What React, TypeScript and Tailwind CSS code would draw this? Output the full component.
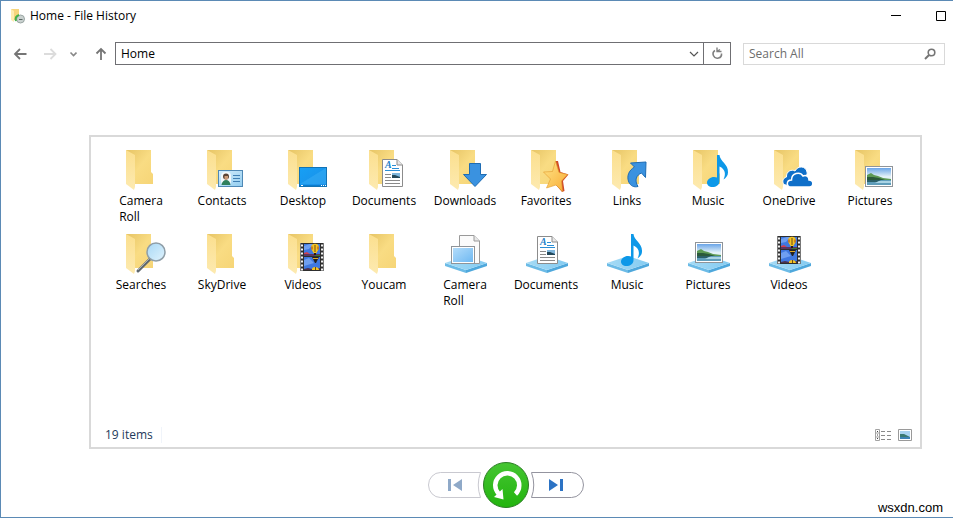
import { ReactNode, useState } from 'react';

type Item = {
  name: string;
  lines?: string[];
  icon: ReactNode;
};

const Folder = ({ children }: { children?: ReactNode }) => (
  <>
    <path d="M10 1H35V23L37 25V35H19Z" fill="url(#folderBack)" />
    <path d="M10 1L19 6V38L18 41L10 35Z" fill="url(#folderFront)" />
    {children}
  </>
);

const Library = ({ children }: { children?: ReactNode }) => (
  <>
    <path d="M5 30L26 37V40L5 33Z" fill="#6cbbe6" />
    <path d="M47 30L26 37V40L47 33Z" fill="#4fa8dc" />
    <path d="M26 23L47 30L26 37L5 30Z" fill="url(#tile)" />
    {children}
  </>
);

const Place = ({ x, y, children }: { x: number; y: number; children: ReactNode }) => (
  <g transform={`translate(${x} ${y})`}>{children}</g>
);

// 21 x 28
const DocumentSheet = () => (
  <>
    <path d="M.5 .5H15L20.500 6V27.500H.5Z" fill="#fff" stroke="#8c8c8c" />
    <path d="M15 .5V6H20.500" fill="#e8e8e8" stroke="#8c8c8c" />
    <text x="3" y="9" fontFamily="Liberation Serif, serif" fontSize="10" fontWeight="700" fontStyle="italic" fill="#1e7fc8">
      A
    </text>
    <path d="M10 6.500H14M10 9.500H17M3 11.500H18" stroke="#2b8fd6" />
    <path d="M3 15.500H9M3 18.500H9M3 21.500H18M3 24.500H18" stroke="#8a8a8a" />
    <rect x="10" y="14" width="8" height="5" fill="#7fb6dc" />
    <path d="M10 16L13 16L18 18V19H10Z" fill="#23485a" />
  </>
);

// 28 x 21
const Photo = () => (
  <>
    <rect x=".5" y=".5" width="27" height="20" fill="#fff" stroke="#8f9499" />
    <rect x="2" y="2" width="24" height="17" fill="url(#sky)" />
    <path d="M2 9L6 7L9 9L13 10L18 12L26 13V14H2Z" fill="#5d9a55" />
    <path d="M2 11L8 11L14 12L20 14H2Z" fill="#2b5a3b" />
    <rect x="2" y="14" width="24" height="5" fill="#5f9dba" />
    <path d="M2 14H16L12 16H2Z" fill="#2c6068" />
    <path d="M14 15H26V17H10Z" fill="#a9d3e4" />
  </>
);

const Balloon = ({ x, y }: { x: number; y: number }) => (
  <Place x={x} y={y}>
    <path d="M0 3.500A4 3.800 0 0 1 8 3.500C8 6 6 7 5.500 9H2.500C2 7 0 6 0 3.500Z" fill="#f4c422" />
    <path d="M1 2.500V5.500M7 2.500V5.500" stroke="#a13a22" fill="none" />
    <path d="M4 1V8" stroke="#6b4a17" />
    <rect x="3" y="9" width="2" height="2" fill="#2a1a10" />
  </Place>
);

// 24 x 28
const Film = () => (
  <>
    <rect width="24" height="28" fill="#2e2e2e" />
    <rect x="4" y="1" width="16" height="12" fill="#3f78e0" />
    <rect x="4" y="14" width="16" height="13" fill="#3f78e0" />
    <path d="M4 3L10 1H13L9 6L4 7ZM4 17L9 15L14 20L4 23Z" fill="#6f9ff0" />
    <path d="M4 10L7 9L10 11H4Z" fill="#cf4052" />
    <path d="M4 11L10 11L20 11V13H4Z" fill="#5e3560" />
    <path d="M15 12H20V13H15Z" fill="#3d7a35" />
    <path d="M4 26L8 25L12 26L20 25V27H4Z" fill="#4c3350" />
    <Balloon x={11} y={1} />
    <path d="M12 14H19L16 20H15Z" fill="#24211f" />
    <path d="M13 15H18V16H13Z" fill="#e0a926" />
    <path d="M12 27C11 23 19 23 19 27Z" fill="#f4c422" />
    <path d="M15.500 24V27" stroke="#6b4a17" />
    <path d="M2 1.500V28M22 1.500V28" stroke="#f2f2f2" strokeWidth="2" strokeDasharray="2 2" />
    <path d="M.5 0V28M23.500 0V28" stroke="#777" />
  </>
);

// 21 x 32
const Note = () => (
  <path
    d="M10 0H12.500C13 6.500 21.500 9 21 17.500C21 20.500 19 23 16.500 24.500C19 19.500 18.500 14 12.500 11.500V26C12.500 30 9 32 5.500 32C2 32 0 30 0 27.500C0 24.500 3.500 22 7 22C8.200 22 9.200 22.200 10 22.600Z"
    fill="#0d98e8"
  />
);

const items: Item[] = [
  { name: 'Camera Roll', lines: ['Camera', 'Roll'], icon: <Folder /> },
  {
    name: 'Contacts',
    icon: (
      <Folder>
        <rect x="21.500" y="21.500" width="24" height="16" fill="url(#card)" stroke="#4f88b5" />
        <rect x="24" y="23" width="10" height="13" rx="4" fill="#f3f8fb" />
        <circle cx="29" cy="27.500" r="3" fill="#5b4334" />
        <path d="M27.500 27H31V30L29 31L27.500 30Z" fill="#c99a78" />
        <path d="M24.500 36C25 32.500 27 31 29 31C31.500 31 33 32.500 33.500 36Z" fill="#2f7f5d" />
        <path d="M36 26.500H43M36 29.500H43M36 32.500H43" stroke="#3f7fb4" />
      </Folder>
    ),
  },
  {
    name: 'Desktop',
    icon: (
      <Folder>
        <rect x="21.500" y="18.500" width="27" height="19" fill="url(#screen)" stroke="#1273b5" />
        <path d="M22 35L48 19V35Z" fill="#3fb1f7" opacity=".45" />
        <path d="M22 36.500H48" stroke="#0d7ccb" />
        <path d="M23 36.500H25M43 36.500H44M45 36.500H46M47 36.500H48" stroke="#fff" />
      </Folder>
    ),
  },
  {
    name: 'Documents',
    icon: (
      <Folder>
        <Place x={23} y={10}>
          <DocumentSheet />
        </Place>
      </Folder>
    ),
  },
  {
    name: 'Downloads',
    icon: (
      <Folder>
        <path d="M29.500 14.500H40.500V25.500H46.500L35 37.500L23.500 25.500H29.500Z" fill="#3a92e0" stroke="#1e6cb3" />
      </Folder>
    ),
  },
  {
    name: 'Favorites',
    icon: (
      <Folder>
        <path d="M35 12L37 12L39.500 23L47.500 25.500L42 32L43.500 42L41 43L35 36Z" fill="#cf4a28" />
        <path
          d="M34.500 12L38 23.500L46.500 25.500L40.500 32L41.500 42.500L35 36L25.500 39L29.500 30L22.500 23L31.500 22.500Z"
          fill="url(#star)"
          stroke="#e39a2b"
          strokeWidth=".6"
        />
      </Folder>
    ),
  },
  {
    name: 'Links',
    icon: (
      <Folder>
        <path
          d="M28.500 14L44 13L43.500 28.500L39.500 24C34.500 26 32 31 36 37.500C32 38.500 28.500 37 26.800 33C24.500 27.500 26.500 21.500 32.500 18Z"
          fill="#3a92e0"
          stroke="#1e6cb3"
        />
      </Folder>
    ),
  },
  {
    name: 'Music',
    icon: (
      <Folder>
        <Place x={24} y={6}>
          <Note />
        </Place>
      </Folder>
    ),
  },
  {
    name: 'OneDrive',
    icon: (
      <Folder>
        <path
          d="M22 36C18 36 17.500 29 22.500 28C22 22 28 20 31 22C34 16 42 17 43 23C44 26 41 28 36 31L26 37Z"
          fill="#0f6fc9"
          stroke="#fff"
          strokeWidth="1"
        />
        <path
          d="M27 38C22 38 22 31 27.500 31C27.500 24 36 22 39 27C42 25.500 45 27.500 45 31C50 31 50 38 45.500 38Z"
          fill="#0f6fc9"
          stroke="#fff"
          strokeWidth="1.500"
        />
      </Folder>
    ),
  },
  {
    name: 'Pictures',
    icon: (
      <Folder>
        <Place x={20} y={17}>
          <Photo />
        </Place>
      </Folder>
    ),
  },
  {
    name: 'Searches',
    icon: (
      <Folder>
        <path d="M34 26L22 38" stroke="#5f686e" strokeWidth="3" strokeLinecap="round" />
        <path d="M33 26L22 37" stroke="#a9b1b6" />
        <circle cx="40" cy="19" r="9" fill="url(#lens)" stroke="#8f9ea8" strokeWidth="1.500" />
      </Folder>
    ),
  },
  { name: 'SkyDrive', icon: <Folder /> },
  {
    name: 'Videos',
    icon: (
      <Folder>
        <Place x={22} y={10}>
          <Film />
        </Place>
      </Folder>
    ),
  },
  { name: 'Youcam', icon: <Folder /> },
  {
    name: 'Camera Roll',
    lines: ['Camera', 'Roll'],
    icon: (
      <Library>
        <path d="M19.500 2.500H34L39.500 8V30.500H19.500Z" fill="#fbfbfb" stroke="#9a9a9a" />
        <path d="M34 2.500V8H39.500" fill="#e8e8e8" stroke="#9a9a9a" />
        <rect x="11.500" y="13.500" width="23" height="17" fill="#fff" stroke="#8f9499" />
        <rect x="13" y="15" width="20" height="14" fill="url(#frame)" />
      </Library>
    ),
  },
  {
    name: 'Documents',
    icon: (
      <Library>
        <Place x={16} y={3}>
          <DocumentSheet />
        </Place>
      </Library>
    ),
  },
  {
    name: 'Music',
    icon: (
      <Library>
        <Place x={19} y={1}>
          <Note />
        </Place>
      </Library>
    ),
  },
  {
    name: 'Pictures',
    icon: (
      <Library>
        <Place x={12} y={9}>
          <Photo />
        </Place>
      </Library>
    ),
  },
  {
    name: 'Videos',
    icon: (
      <Library>
        <Place x={13} y={3}>
          <Film />
        </Place>
      </Library>
    ),
  },
];

const Gradients = () => (
  <svg className="absolute h-0 w-0" aria-hidden="true">
    <defs>
      <linearGradient id="folderBack" x1="0" y1="0" x2="1" y2="1">
        <stop offset="0" stopColor="#e6c465" />
        <stop offset=".5" stopColor="#f9dc83" />
        <stop offset="1" stopColor="#f6d577" />
      </linearGradient>
      <linearGradient id="folderFront" x1="0" y1="0" x2="0" y2="1">
        <stop offset="0" stopColor="#fbdf8e" />
        <stop offset="1" stopColor="#fdeab0" />
      </linearGradient>
      <linearGradient id="tile" x1="0" y1="0" x2="1" y2="0">
        <stop offset="0" stopColor="#a5dbf5" />
        <stop offset="1" stopColor="#84cbf1" />
      </linearGradient>
      <linearGradient id="sky" x1="0" y1="0" x2="0" y2="1">
        <stop offset="0" stopColor="#6aa5e8" />
        <stop offset=".5" stopColor="#e2f1f8" />
      </linearGradient>
      <linearGradient id="card" x1="0" y1="0" x2="1" y2="1">
        <stop offset="0" stopColor="#d5edfb" />
        <stop offset="1" stopColor="#92cdf0" />
      </linearGradient>
      <linearGradient id="screen" x1="0" y1="0" x2="1" y2="1">
        <stop offset="0" stopColor="#17a0f5" />
        <stop offset="1" stopColor="#1a8ee6" />
      </linearGradient>
      <linearGradient id="frame" x1="0" y1="0" x2="1" y2="1">
        <stop offset="0" stopColor="#b3dcfa" />
        <stop offset="1" stopColor="#6fb9f2" />
      </linearGradient>
      <linearGradient id="star" x1="0" y1="0" x2="1" y2="1">
        <stop offset="0" stopColor="#ffe68a" />
        <stop offset="1" stopColor="#f8ab33" />
      </linearGradient>
      <linearGradient id="lens" x1="0" y1="0" x2="1" y2="1">
        <stop offset="0" stopColor="#a8d8f5" />
        <stop offset="1" stopColor="#e0f3fd" />
      </linearGradient>
      <linearGradient id="green" x1="0" y1="0" x2="0" y2="1">
        <stop offset="0" stopColor="#45c532" />
        <stop offset="1" stopColor="#22b40e" />
      </linearGradient>
    </defs>
  </svg>
);

const TitleBar = () => (
  <header className="flex h-[30px] items-center pl-2.5">
    <svg width="14" height="16" viewBox="0 0 14 16" aria-hidden="true">
      <path d="M0 1H8V12H0Z" fill="#f6d57c" />
      <path d="M0 1L3 3V14L0 12Z" fill="#fdecb0" />
      <circle cx="9.500" cy="11" r="4" fill="#c9d1cf" stroke="#9aa5a3" />
      <path d="M8 11.500H11.500" stroke="#5b6765" fill="none" />
      <path d="M5 13C4 10 5 8 8 7" stroke="#43b04a" strokeWidth="2" fill="none" />
    </svg>
    <h1 className="ml-[5px] flex-1 text-xs text-black">Home - File History</h1>
    <button type="button" aria-label="Minimize" className="flex w-[45px] justify-center">
      <svg width="11" height="11" viewBox="0 0 11 11">
        <path d="M0 4.500H10" stroke="#000" />
      </svg>
    </button>
    <button type="button" aria-label="Maximize" className="flex w-[34px] justify-end pr-[7px]">
      <svg width="10" height="10" viewBox="0 0 10 10">
        <path d="M.5 .5H9.500V9.500H.5Z" stroke="#000" fill="none" />
      </svg>
    </button>
  </header>
);

const NavBar = () => {
  const [address, setAddress] = useState('Home');
  const [search, setSearch] = useState('');

  return (
    <nav className="mt-[11px] flex items-center pr-2">
      <div className="flex w-[114px] items-center pl-3">
        <button type="button" aria-label="Back">
          <svg width="14" height="14" viewBox="0 0 14 14" fill="none" stroke="#757575" strokeWidth="1.800">
            <path d="M2 7H13.500M7 2L2 7L7 12" />
          </svg>
        </button>
        <button type="button" aria-label="Forward" className="ml-4">
          <svg width="14" height="14" viewBox="0 0 14 14" fill="none" stroke="#dcdcdc" strokeWidth="1.800">
            <path d="M1 7H12.500M7.500 2L12.500 7L7.500 12" />
          </svg>
        </button>
        <button type="button" aria-label="Recent locations" className="ml-3">
          <svg width="8" height="8" viewBox="0 0 8 8" fill="none" stroke="#888" strokeWidth="1.600">
            <path d="M1.500 2.500L4.500 5.500L7.500 2.500" />
          </svg>
        </button>
        <button type="button" aria-label="Up" className="ml-[18px]">
          <svg width="12" height="14" viewBox="0 0 12 14" fill="none" stroke="#757575" strokeWidth="1.800">
            <path d="M6 13V2M1.500 6.500L6 2L10.500 6.500" />
          </svg>
        </button>
      </div>
      <div className="flex h-[23px] flex-1 border border-[#6f6f73] bg-white">
        <input
          aria-label="Address"
          className="min-w-0 flex-1 px-[5px] text-xs text-black outline-none"
          value={address}
          onChange={(e) => setAddress(e.target.value)}
        />
        <button type="button" aria-label="Previous locations" className="flex w-[18px] items-center justify-center">
          <svg width="10" height="8" viewBox="0 0 10 8" fill="none" stroke="#555" strokeWidth="1.200">
            <path d="M1 2L5 6L9 2" />
          </svg>
        </button>
        <button type="button" aria-label="Refresh" className="flex w-[27px] items-center justify-center border-l border-[#6f6f73]">
          <svg width="12" height="14" viewBox="0 0 12 14" fill="none" stroke="#808080" strokeWidth="1.600">
            <path d="M4 3.500A4.200 4.200 0 1 0 10.500 6.500" />
            <path d="M6 .5V4.500H10.500M6.500 4L9 2.500" strokeWidth="1.400" />
          </svg>
        </button>
      </div>
      <div className="ml-3 flex h-[22px] w-[202px] items-center border border-[#d9d9d9]">
        <input
          type="search"
          aria-label="Search All"
          placeholder="Search All"
          className="min-w-0 flex-1 px-[5px] text-xs text-black outline-none placeholder:text-[#6d6d6d]"
          value={search}
          onChange={(e) => setSearch(e.target.value)}
        />
        <button type="button" aria-label="Search" className="mr-2">
          <svg width="12" height="12" viewBox="0 0 12 12" fill="none" stroke="#757575">
            <circle cx="7.500" cy="4.500" r="3.300" strokeWidth="1.600" />
            <path d="M5 7L1 11" strokeWidth="2" />
          </svg>
        </button>
      </div>
    </nav>
  );
};

const ItemTile = ({ name, lines = [name], icon }: Item) => (
  <li className="min-h-[84px] w-[81px]">
    <button type="button" className="flex w-full flex-col items-center">
      <svg width="49" height="44" viewBox="0 0 49 44" className="overflow-visible" aria-hidden="true">
        {icon}
      </svg>
      <span className="pl-px text-left text-xs leading-4 text-black">
        {lines.map((line) => (
          <span key={line} className="block">
            {line}
          </span>
        ))}
      </span>
    </button>
  </li>
);

const StatusBar = () => (
  <footer className="flex h-6 items-center pr-2 pl-3.5 text-xs text-[#1e395b]">
    <span className="border-r border-[#f0f4fa] pr-2">{items.length} items</span>
    <div className="ml-auto flex items-center gap-[7px]">
      <button type="button" aria-label="Details view">
        <svg width="16" height="12" viewBox="0 0 16 12" fill="none">
          <path d="M.5 .5H4.500V11.500H.5ZM.5 4H4.500M.5 8H4.500" stroke="#a3a3a3" />
          <path d="M2 2.500H3M2 6H3M2 9.500H3" stroke="#444" />
          <path d="M6 2.500H10M12 2.500H16M6 6.500H10M12 6.500H16M6 10.500H10M12 10.500H16" stroke="#8a8a8a" />
        </svg>
      </button>
      <button type="button" aria-label="Large icons view">
        <svg width="14" height="12" viewBox="0 0 14 12">
          <path d="M.5 .5H13.500V11.500H.5Z" fill="#fff" stroke="#9a9a9a" />
          <path d="M2 2H12V10H2Z" fill="#a9d3f0" />
          <path d="M2 5L6 5L12 8V10H2Z" fill="#3b7a72" />
          <path d="M2 8H12V10H2Z" fill="#3d82b5" />
        </svg>
      </button>
    </div>
  </footer>
);

const Controls = () => (
  <div className="mt-3 mr-[30px] mb-2 ml-[88px] flex items-center justify-center">
    <button type="button" aria-label="Previous version">
      <svg width="54" height="28" viewBox="0 0 54 28">
        <path d="M12.500 1.500H52.500Q48 14 52.500 26.500H12.500A12 12.500 0 0 1 12.500 1.500Z" fill="#fff" stroke="#c9c9d0" />
        <path d="M20 8H23V20H20ZM34 8V20L25 14Z" fill="#8fa9c8" />
      </svg>
    </button>
    <button type="button" aria-label="Restore">
      <svg width="48" height="48" viewBox="0 0 48 48">
        <circle cx="24" cy="24" r="22.500" fill="url(#green)" stroke="#2c7d25" />
        <path d="M33.500 33A12 12 0 1 0 16.500 32.500" fill="none" stroke="#fff" strokeWidth="4.500" />
        <path d="M12 36L20.500 28L21.500 38.500Z" fill="#fff" />
      </svg>
    </button>
    <button type="button" aria-label="Next version">
      <svg width="54" height="28" viewBox="0 0 54 28">
        <path d="M41.500 1.500H1.500Q6 14 1.500 26.500H41.500A12 12.500 0 0 0 41.500 1.500Z" fill="#fff" stroke="#94949f" />
        <path d="M30 8H33V20H30ZM19 8V20L28 14Z" fill="#2c73c4" />
      </svg>
    </button>
  </div>
);

const App = () => (
  <div className="relative flex min-h-screen flex-col border-y border-l border-[#5b8ab5] bg-white font-['Open_Sans','Noto_Sans',sans-serif]">
    <Gradients />
    <TitleBar />
    <NavBar />
    <main className="mt-[70px] mr-[31px] ml-[88px] flex flex-1 flex-col border-2 border-[#d9d9d9]">
      <ul className="flex flex-1 flex-wrap content-start pt-3 pl-[9px]">
        {items.map((item, index) => (
          <ItemTile key={index} {...item} />
        ))}
      </ul>
      <StatusBar />
    </main>
    <Controls />
    <a
      href="#"
      className="absolute right-2.5 bottom-0 font-['Liberation_Sans',Arial,sans-serif] text-[13px] leading-[18px] text-black"
    >
      wsxdn.com
    </a>
  </div>
);

export default App;
